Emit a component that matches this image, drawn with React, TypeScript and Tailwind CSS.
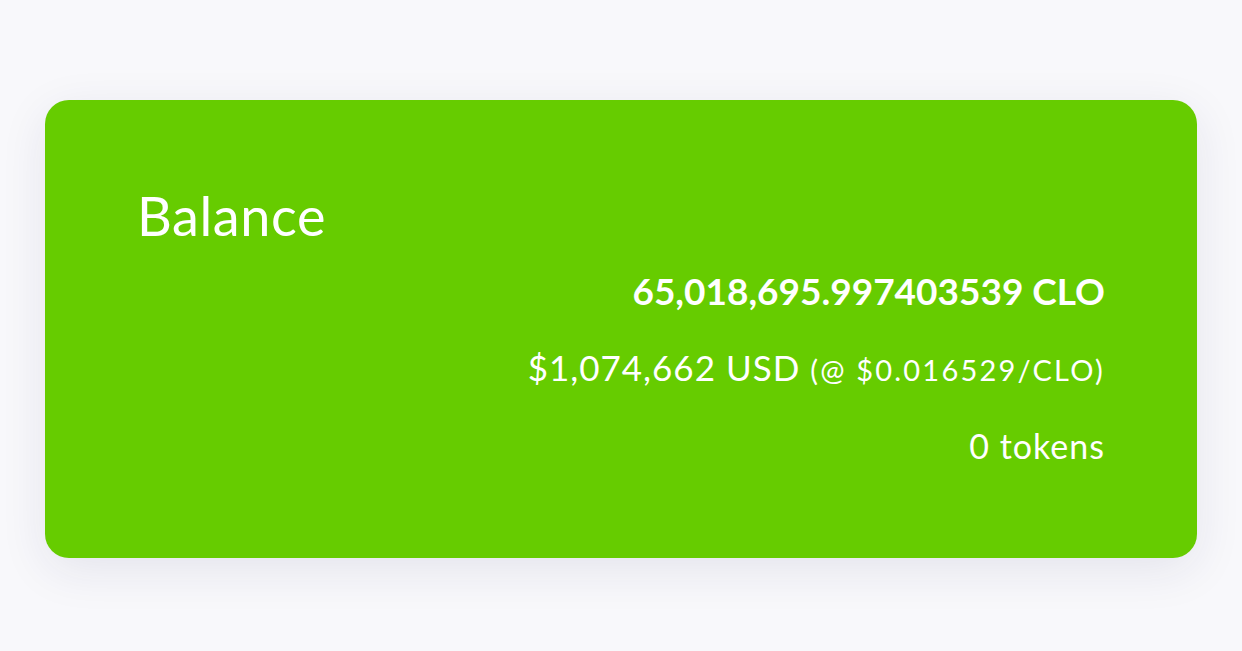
export default function App() {
  return (
    <div
      className="h-[651px] w-full bg-[#f8f8fb] px-[45px] pt-[100px]"
      style={{ fontFamily: "Lato, 'Noto Sans', sans-serif" }}
    >
      <div className="flex h-[458px] flex-col rounded-[24px] bg-[#66cc00] px-[92px] pt-[84px] text-white shadow-[0_12px_48px_rgba(30,30,90,0.09)]">
        <h1 className="text-[54px] leading-[64px] font-normal tracking-[0.6px]">Balance</h1>
        <div className="mt-[19px] flex flex-col items-end">
          <div className="text-[37px] leading-[48px] font-bold">65,018,695.997403539 CLO</div>
          <div className="mt-[28px] text-[35px] leading-[48px] tracking-[1px]">
            $1,074,662 USD <span className="text-[29px] tracking-[2.2px]">(@ $0.016529/CLO)</span>
          </div>
          <div className="mt-[28px] text-[34px] leading-[48px] tracking-[1px]">0 tokens</div>
        </div>
      </div>
    </div>
  );
}
